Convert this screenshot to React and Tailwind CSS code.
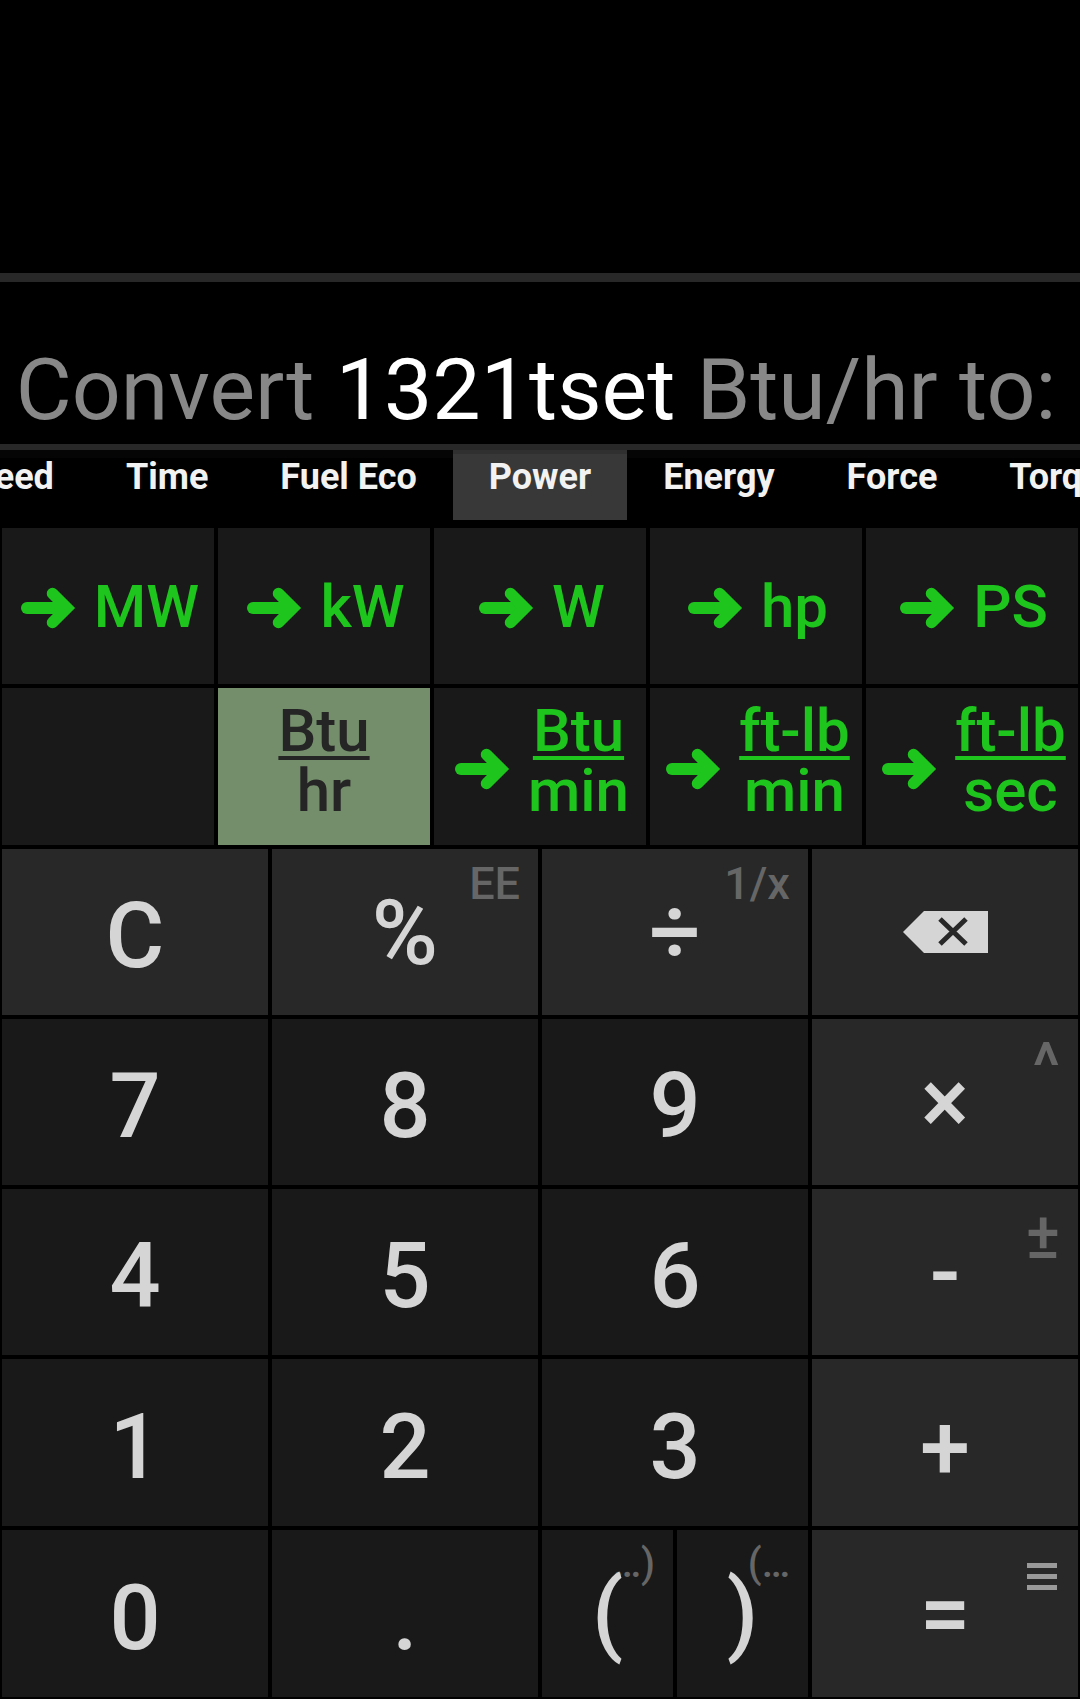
const tabsBefore = ['Speed', 'Time', 'Fuel Eco'];
const tabsAfter = ['Energy', 'Force', 'Torque'];

const units = [
  { top: 'MW' },
  { top: 'kW' },
  { top: 'W' },
  { top: 'hp' },
  { top: 'PS' },
  null,
  { top: 'Btu', bottom: 'hr', selected: true },
  { top: 'Btu', bottom: 'min' },
  { top: 'ft-lb', bottom: 'min' },
  { top: 'ft-lb', bottom: 'sec' },
];

function ArrowIcon() {
  return (
    <svg viewBox="0 0 55 42" className="mt-1 h-[42px] w-[55px] shrink-0" fill="none" stroke="currentColor" strokeWidth="12" strokeLinecap="round" aria-hidden="true">
      <path d="M6 21H42" />
      <path d="M31.500 6.500L46 21L31.500 35.500" strokeWidth="11.5" strokeLinejoin="miter" />
    </svg>
  );
}

function BackspaceIcon() {
  return (
    <svg viewBox="0 0 85 42" className="h-[42px] w-[85px]" aria-hidden="true">
      <path d="M0 21L21 0H85V42H21Z" fill="#d5d5d5" />
      <path d="M37 8L63 33M63 8L37 33" stroke="#282828" strokeWidth="5" />
    </svg>
  );
}

function MenuIcon() {
  return (
    <svg viewBox="0 0 30 28" className="h-7 w-[30px]" aria-hidden="true">
      <path d="M0 2.500H30M0 13.500H30M0 24.500H30" stroke="#999999" strokeWidth="5" />
    </svg>
  );
}

function Tab({ name, active }) {
  return (
    <button
      role="tab"
      aria-selected={!!active}
      className={`shrink-0 whitespace-nowrap px-9 pt-1.5 pb-[22px] text-4xl/[42px] font-bold text-[#f2f2f2] ${
        active ? 'bg-[#383838] shadow-[inset_0_4px_0_#303030]' : ''
      }`}
    >
      {name}
    </button>
  );
}

function UnitKey({ unit }) {
  if (!unit) return <div className="bg-[#191919]" />;
  const { top, bottom, selected } = unit;
  return (
    <button
      aria-pressed={!!selected}
      className={`flex items-center justify-center gap-[18px] text-6xl/[60px] font-medium ${
        selected ? 'bg-[#748e6b] text-[#252525]' : 'bg-[#191919] pl-1 text-[#1dc51d]'
      }`}
    >
      {!selected && <ArrowIcon />}
      {bottom ? (
        <span className="flex flex-col items-center pb-3">
          <span className="underline decoration-4 underline-offset-[5px] [text-decoration-skip-ink:none]">{top}</span>
          <span>{bottom}</span>
        </span>
      ) : (
        <span className="pt-px">{top}</span>
      )}
    </button>
  );
}

function Key({ children, hint, hintClass = 'top-3 right-[18px] text-[45px]/[45px]', tone = 'bg-[#191919]', pad = 'pt-2.5', label }) {
  return (
    <button
      aria-label={label}
      className={`relative flex items-center justify-center text-[90px]/[106px] font-medium text-[#d5d5d5] ${tone} ${pad}`}
    >
      {hint && <span className={`absolute text-[#666666] ${hintClass}`}>{hint}</span>}
      <span className="relative">{children}</span>
    </button>
  );
}

const OP = 'bg-[#282828]';

export default function App() {
  return (
    <main className="flex min-h-screen flex-col bg-black font-['Roboto',sans-serif]">
      <section className="h-[273px]" aria-label="History" />
      <output className="flex h-[177px] items-end justify-center whitespace-pre border-t-[9px] border-b-[6px] border-[#282828] pr-2 text-[86px]/[108px] text-[#888888]">
        <span>
          Convert <span className="text-white">1321tset</span> Btu/hr to:
        </span>
      </output>
      <nav
        role="tablist"
        className="grid h-[76px] grid-cols-[1fr_auto_1fr] items-start overflow-hidden shadow-[inset_0_8px_0_#050505]"
      >
        <div className="flex min-w-0 justify-end overflow-hidden">
          {tabsBefore.map((t) => (
            <Tab key={t} name={t} />
          ))}
        </div>
        <Tab name="Power" active />
        <div className="flex min-w-0 overflow-hidden">
          {tabsAfter.map((t) => (
            <Tab key={t} name={t} />
          ))}
        </div>
      </nav>
      <section className="grid h-[321px] grid-cols-5 grid-rows-[156fr_157fr] gap-1 p-0.5" aria-label="Units">
        {units.map((u, i) => (
          <UnitKey key={i} unit={u} />
        ))}
      </section>
      <section
        className="grid flex-1 grid-cols-4 grid-rows-[166fr_166fr_166fr_167fr_167fr] gap-1 p-0.5"
        aria-label="Keypad"
      >
        <Key tone={OP}>C</Key>
        <Key tone={OP} hint="EE" pad="pt-1">%</Key>
        <Key tone={OP} hint="1/x" pad="pt-0.5">÷</Key>
        <Key tone={OP} label="Backspace" pad="">
          <BackspaceIcon />
        </Key>
        <Key>7</Key>
        <Key>8</Key>
        <Key>9</Key>
        <Key tone={OP} hint="^" hintClass="top-4 right-[18px] text-[64px]/[64px]" pad="pt-0.5">×</Key>
        <Key>4</Key>
        <Key>5</Key>
        <Key>6</Key>
        <Key tone={OP} hint="±" hintClass="top-4 right-[18px] text-[64px]/[64px]" pad="pt-0.5">-</Key>
        <Key>1</Key>
        <Key>2</Key>
        <Key>3</Key>
        <Key tone={OP} pad="pt-3">+</Key>
        <Key>0</Key>
        <Key>.</Key>
        <div className="grid grid-cols-2 gap-1">
          <Key hint="…)" hintClass="top-3 right-[18px] text-[40px]/[44px]" pad="">(</Key>
          <Key hint="(…" hintClass="top-3 right-[18px] text-[40px]/[44px]" pad="">)</Key>
        </div>
        <Key tone={OP} hint={<MenuIcon />} hintClass="top-[33px] right-[21px]" pad="pt-0.5">=</Key>
      </section>
    </main>
  );
}
